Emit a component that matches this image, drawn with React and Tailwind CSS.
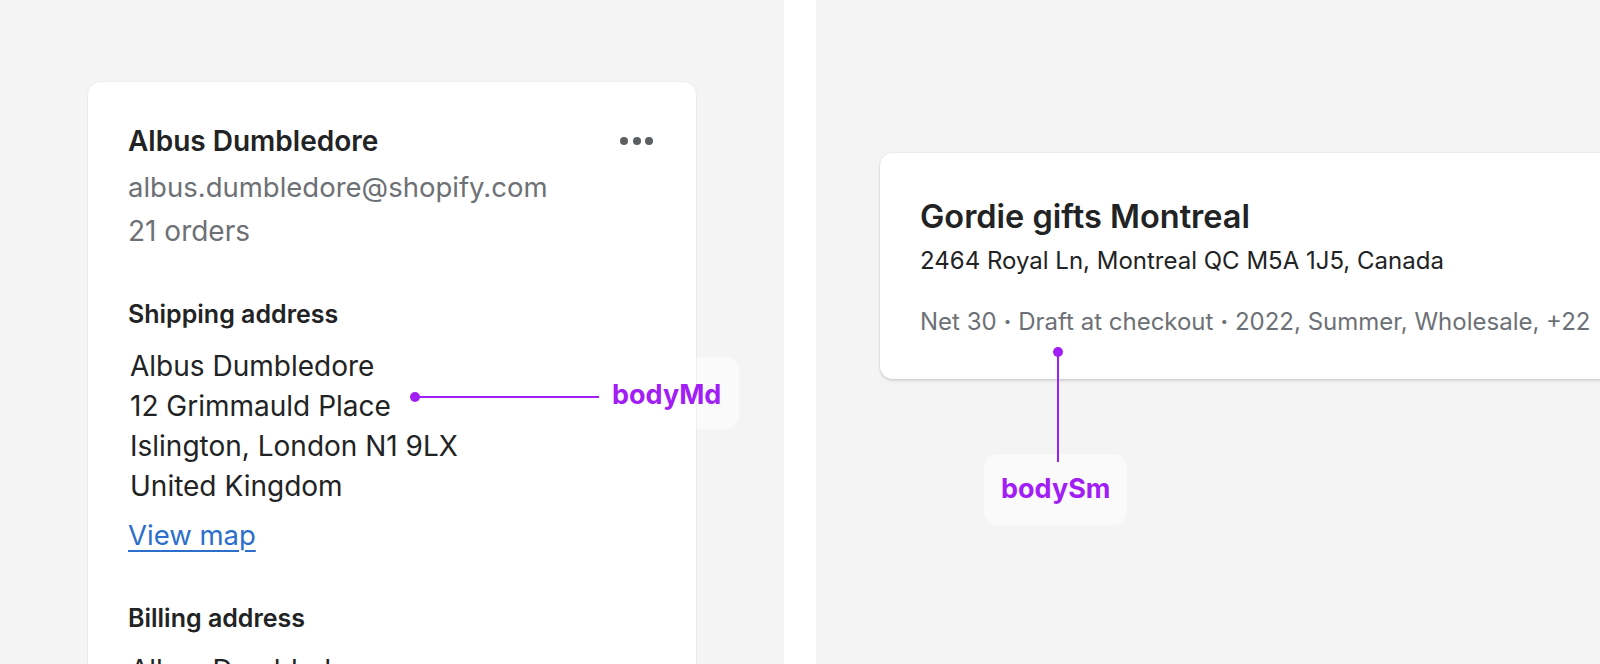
export default function App() {
  const font = { fontFamily: "Inter, 'Noto Sans', sans-serif" };
  return (
    <div className="flex w-[1600px] h-[664px] overflow-hidden bg-white" style={font}>
      {/* left panel */}
      <div className="relative w-[784px] shrink-0 bg-[#f4f4f4] pt-[82px] pl-[88px]">
        <div className="absolute left-[594px] top-[357px] h-[72px] rounded-[14px] bg-[#fafafa] px-[18px] flex items-center">
          <span className="text-[27px] font-bold opacity-0">bodyMd</span>
        </div>
        <div className="relative w-[608px] h-[700px] rounded-[13px] bg-white shadow-[0_1px_2px_rgba(0,0,0,0.05),0_0_0_1px_rgba(0,0,0,0.025)] pt-[39px] pl-[40px] pr-[43px]">
          <div className="flex items-start justify-between">
            <div className="text-[28px] leading-[40px] font-semibold text-[#222324]">Albus Dumbledore</div>
            <div className="flex gap-[4.5px] pt-[16px]">
              <span className="w-[8px] h-[8px] rounded-full bg-[#5c5f62]" />
              <span className="w-[8px] h-[8px] rounded-full bg-[#5c5f62]" />
              <span className="w-[8px] h-[8px] rounded-full bg-[#5c5f62]" />
            </div>
          </div>
          <div className="mt-[4px] text-[27.5px] leading-[44px] text-[#6d7175]">albus.dumbledore@shopify.com</div>
          <div className="text-[28px] leading-[44px] text-[#6d7175]">21 orders</div>

          <div className="mt-[43px] text-[25px] leading-[36px] font-semibold text-[#222324]">Shipping address</div>
          <div className="mt-[14px] pl-[2px] text-[28px] leading-[40px] text-[#222324]">
            <div>Albus Dumbledore</div>
            <div>12 Grimmauld Place</div>
            <div>Islington, London N1 9LX</div>
            <div>United Kingdom</div>
          </div>
          <div className="mt-[9px] text-[27.5px] leading-[40px]">
            <a className="text-[#2c6ecb] underline underline-offset-[5px] decoration-[1.5px]">View map</a>
          </div>

          <div className="mt-[45px] text-[25px] leading-[36px] font-semibold text-[#222324]">Billing address</div>
          <div className="mt-[14px] pl-[2px] text-[28px] leading-[40px] text-[#222324]">
            <div>Albus Dumbledore</div>
          </div>
        </div>

        {/* bodyMd annotation */}
        <div className="absolute left-[410px] top-[392px] w-[10px] h-[10px] rounded-full bg-[#a11ef5]" />
        <div className="absolute left-[415px] top-[396px] w-[184px] h-[2px] bg-[#a11ef5]" />
        <div className="absolute left-[612px] top-[375px] text-[27px] leading-[40px] font-bold text-[#a11ef5]">bodyMd</div>
      </div>

      {/* divider */}
      <div className="w-[32px] shrink-0 bg-white" />

      {/* right panel */}
      <div className="relative flex-1 bg-[#f4f4f4] pt-[153px] pl-[64px]">
        <div className="w-[900px] h-[226px] rounded-[13px] bg-white shadow-[0_2px_3px_rgba(0,0,0,0.12),0_0_0_1px_rgba(0,0,0,0.03)] pt-[44px] pl-[40px]">
          <div className="text-[32.5px] leading-[40px] font-semibold text-[#222324]">Gordie gifts Montreal</div>
          <div className="mt-[8px] text-[24px] leading-[32px] text-[#222324]">2464 Royal Ln, Montreal QC M5A 1J5, Canada</div>
          <div className="mt-[29px] text-[24px] leading-[32px] text-[#6d7175] whitespace-nowrap">
            Net 30 <span className="font-bold">·</span> Draft at checkout <span className="font-bold">·</span> 2022, Summer, Wholesale, +22
          </div>
        </div>

        {/* bodySm annotation */}
        <div className="absolute left-[168px] top-[454px] h-[71px] rounded-[14px] bg-[#fafafa] px-[17px] flex items-center">
          <span className="text-[27px] font-bold text-[#a11ef5]">bodySm</span>
        </div>
        <div className="absolute left-[237px] top-[347px] w-[10px] h-[10px] rounded-full bg-[#a11ef5]" />
        <div className="absolute left-[241px] top-[352px] w-[2px] h-[110px] bg-[#a11ef5]" />
      </div>
    </div>
  );
}
